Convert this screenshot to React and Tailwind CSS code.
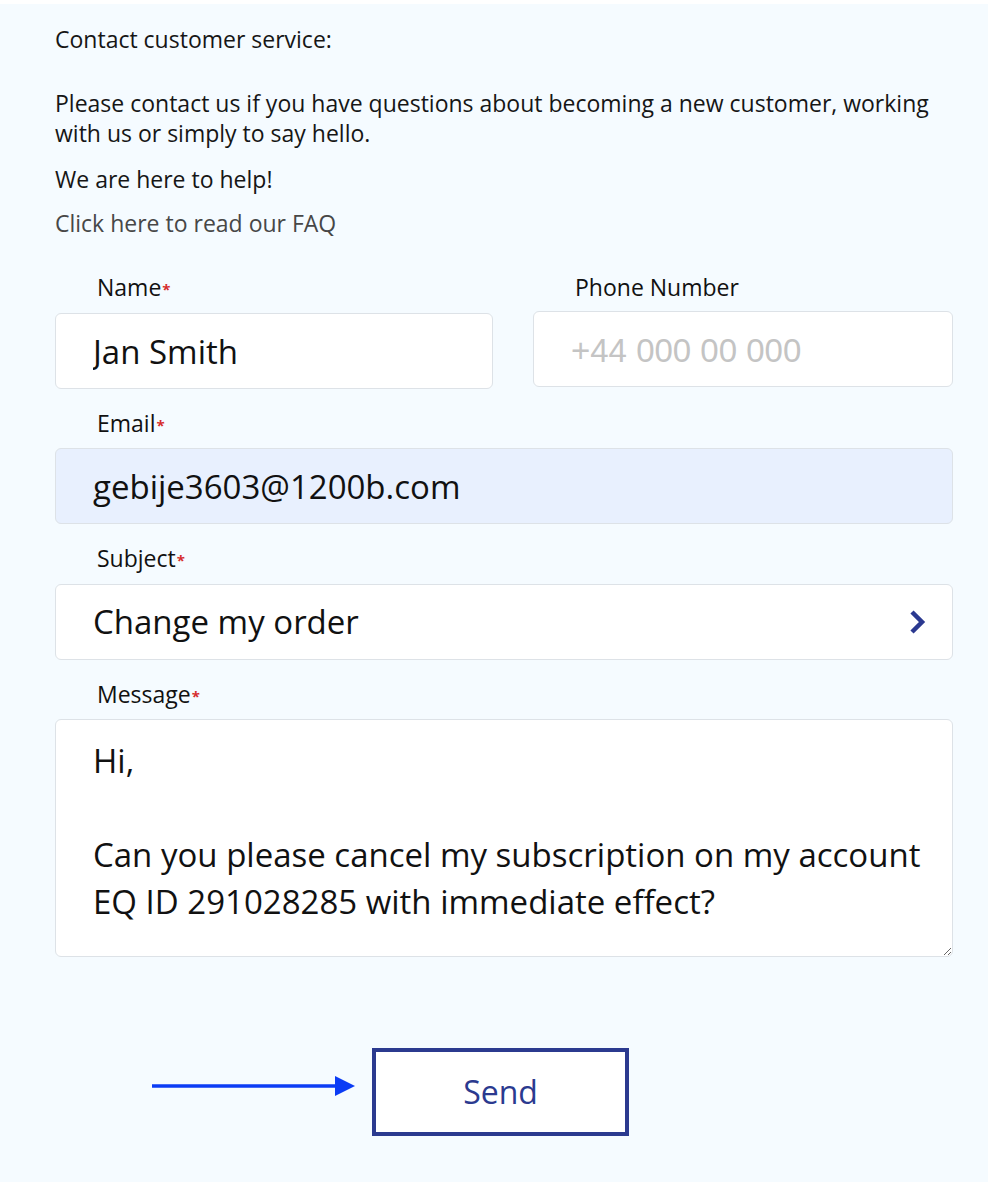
import React from 'react';

const LABEL = "font-['Open_Sans',sans-serif] text-[23px] leading-[28px] text-[#111]";
const FIELD =
  "block w-full h-[76px] rounded-[6px] border border-[#dde2e7] pl-[37px] pr-4 font-['Open_Sans',sans-serif] text-[33px] text-[#111] outline-none";

function Label({ children, required }) {
  return (
    <div className={`${LABEL} pl-[42px]`}>
      {children}
      {required && <span className="text-[#d62d2d] text-[15px] font-bold align-top relative top-[2px] ml-[1px]">*</span>}
    </div>
  );
}

export default function App() {
  return (
    <div className="min-h-[1182px] bg-[#f5fbff] border-t-4 border-white">
      <div className="ml-[55px] w-[898px] pt-[20px] font-['Open_Sans',sans-serif] text-[#161616]">
        {/* Intro */}
        <p className="text-[23px] leading-[30px]">Contact customer service:</p>
        <p className="mt-[34px] text-[23px] leading-[30px]">
          Please contact us if you have questions about becoming a new customer, working with us or simply to say hello.
        </p>
        <p className="mt-[16px] text-[23px] leading-[30px]">We are here to help!</p>
        <a className="mt-[14px] block text-[23px] leading-[30px] text-[#474747]" href="#faq">
          Click here to read our FAQ
        </a>

        {/* Name + Phone */}
        <div className="mt-[35px] grid grid-cols-[438px_420px] gap-x-[40px]">
          <div>
            <Label required>Name</Label>
            <input className={`${FIELD} mt-[12px] bg-white`} defaultValue="Jan Smith" />
          </div>
          <div>
            <Label>Phone Number</Label>
            <input
              className={`${FIELD} mt-[10px] bg-white placeholder:text-[#c4c4c4] placeholder:font-['Liberation_Sans',sans-serif]`}
              placeholder="+44 000 00 000"
            />
          </div>
        </div>

        {/* Email */}
        <div className="mt-[20px]">
          <Label required>Email</Label>
          <input className={`${FIELD} mt-[11px] bg-[#e8f0fe]`} defaultValue="gebije3603@1200b.com" />
        </div>

        {/* Subject */}
        <div className="mt-[20px]">
          <Label required>Subject</Label>
          <div className={`${FIELD} mt-[12px] bg-white flex items-center justify-between pr-[26px]`}>
            <span>Change my order</span>
            <svg width="18" height="26" viewBox="0 0 18 26" fill="none">
              <polyline points="4,3 14,13 4,23" stroke="#2b3990" strokeWidth="4.5" strokeLinejoin="miter" />
            </svg>
          </div>
        </div>

        {/* Message */}
        <div className="mt-[20px]">
          <Label required>Message</Label>
          <textarea
            className="mt-[11px] block w-full h-[238px] rounded-[6px] border border-[#dde2e7] bg-white pl-[37px] pr-4 pt-[17px] font-['Open_Sans',sans-serif] text-[33px] leading-[47px] text-[#111] outline-none"
            defaultValue={'Hi,\n\nCan you please cancel my subscription on my account EQ ID 291028285 with immediate effect?'}
          />
        </div>

        {/* Send */}
        <div className="mt-[91px] flex items-center">
          <svg width="220" height="24" viewBox="0 0 220 24" className="ml-[97px] mt-[-12px]">
            <line x1="0" y1="12" x2="188" y2="12" stroke="#0b3cf5" strokeWidth="3.5" />
            <polygon points="183,2 203,12 183,22" fill="#0b3cf5" />
          </svg>
          <button className="w-[257px] h-[88px] border-[4px] border-[#2b3a8f] bg-white font-['Open_Sans',sans-serif] text-[32px] font-medium text-[#2b3a8f]">
            Send
          </button>
        </div>
      </div>
    </div>
  );
}
